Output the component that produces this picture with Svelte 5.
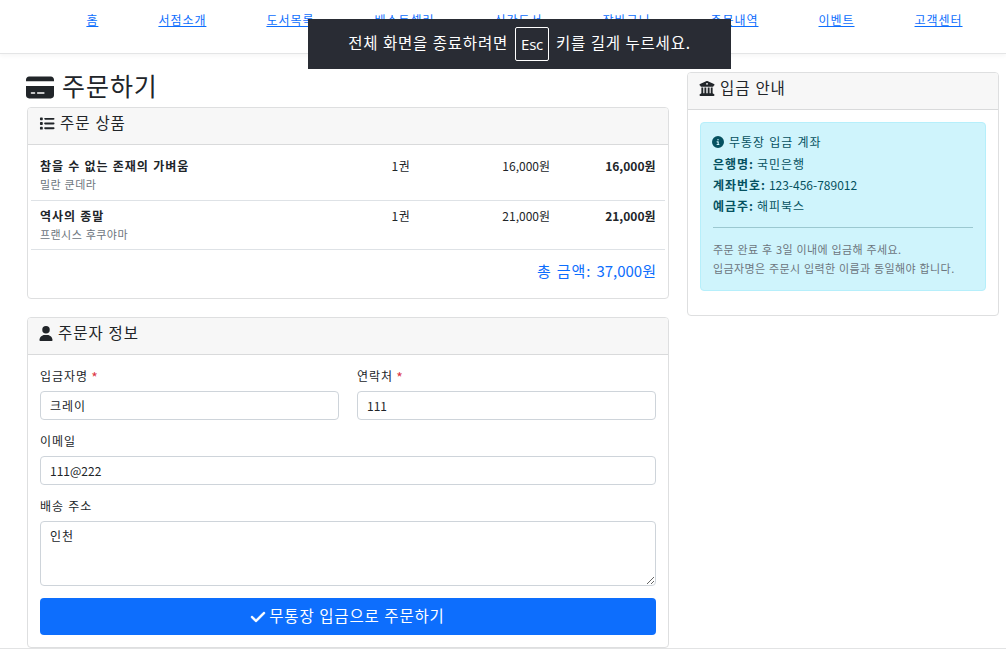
<script>
  const menu = ['홈', '서점소개', '도서목록', '베스트셀러', '신간도서', '장바구니', '주문내역', '이벤트', '고객센터'];
  const items = [
    { title: '참을 수 없는 존재의 가벼움', author: '밀란 쿤데라', qty: '1권', price: '16,000원', sum: '16,000원' },
    { title: '역사의 종말', author: '프랜시스 후쿠야마', qty: '1권', price: '21,000원', sum: '21,000원' }
  ];
  let name = $state('크레이');
  let phone = $state('111');
  let email = $state('111@222');
  let address = $state('인천');

  const icons = {
    card: [576, 'M64 32C28.7 32 0 60.7 0 96v32H576V96c0-35.3-28.7-64-64-64H64zM576 224H0V416c0 35.3 28.7 64 64 64H512c35.3 0 64-28.7 64-64V224zM112 352h64c8.8 0 16 7.2 16 16s-7.2 16-16 16H112c-8.8 0-16-7.2-16-16s7.2-16 16-16zm112 16c0-8.8 7.2-16 16-16H368c8.8 0 16 7.2 16 16s-7.2 16-16 16H240c-8.8 0-16-7.2-16-16z'],
    list: [512, 'M40 48C26.7 48 16 58.7 16 72v48c0 13.3 10.7 24 24 24H88c13.3 0 24-10.7 24-24V72c0-13.3-10.7-24-24-24H40zM192 64c-17.7 0-32 14.3-32 32s14.3 32 32 32H480c17.7 0 32-14.3 32-32s-14.3-32-32-32H192zm0 160c-17.7 0-32 14.3-32 32s14.3 32 32 32H480c17.7 0 32-14.3 32-32s-14.3-32-32-32H192zm0 160c-17.7 0-32 14.3-32 32s14.3 32 32 32H480c17.7 0 32-14.3 32-32s-14.3-32-32-32H192zM16 232v48c0 13.3 10.7 24 24 24H88c13.3 0 24-10.7 24-24V232c0-13.3-10.7-24-24-24H40c-13.3 0-24 10.7-24 24zM40 368c-13.3 0-24 10.7-24 24v48c0 13.3 10.7 24 24 24H88c13.3 0 24-10.7 24-24V392c0-13.3-10.7-24-24-24H40z'],
    user: [448, 'M224 256A128 128 0 1 0 224 0a128 128 0 1 0 0 256zm-45.7 48C79.8 304 0 383.8 0 482.3C0 498.7 13.3 512 29.7 512H418.3c16.4 0 29.7-13.3 29.7-29.7C448 383.8 368.2 304 269.7 304H178.3z'],
    bank: [512, 'M243.4 2.6l-224 96c-14 6-21.8 21-18.7 35.8S16.8 160 32 160v8c0 13.3 10.7 24 24 24H456c13.3 0 24-10.7 24-24v-8c15.2 0 28.3-10.7 31.3-25.6s-4.8-29.9-18.7-35.8l-224-96c-8-3.4-17.2-3.4-25.2 0zM128 224H64V420.3c-.6 .3-1.2 .7-1.8 1.1l-48 32c-11.7 7.8-17 22.4-12.9 35.9S17.9 512 32 512H480c14.1 0 26.5-9.2 30.6-22.7s-1.1-28.1-12.9-35.9l-48-32c-.6-.4-1.2-.7-1.8-1.1V224H384V416H344V224H280V416H232V224H168V416H128V224zM256 64a32 32 0 1 1 0 64 32 32 0 1 1 0-64z'],
    info: [512, 'M256 512A256 256 0 1 0 256 0a256 256 0 1 0 0 512zM216 336h24V272H216c-13.3 0-24-10.7-24-24s10.7-24 24-24h48c13.3 0 24 10.7 24 24v88h8c13.3 0 24 10.7 24 24s-10.7 24-24 24H216c-13.3 0-24-10.7-24-24s10.7-24 24-24zm40-208a32 32 0 1 1 0 64 32 32 0 1 1 0-64z'],
    check: [448, 'M438.6 105.4c12.5 12.5 12.5 32.8 0 45.3l-256 256c-12.5 12.5-32.8 12.5-45.3 0l-128-128c-12.5-12.5-12.5-32.8 0-45.3s32.8-12.5 45.3 0L160 338.7 393.4 105.4c12.5-12.5 32.8-12.5 45.3 0z']
  };
</script>

{#snippet icon(key)}
  <svg class="icon" viewBox="0 0 {icons[key][0]} 512" aria-hidden="true"><path d={icons[key][1]} /></svg>
{/snippet}

<div class="page">
  <nav>
    {#each menu as m}<a href="#top">{m}</a>{/each}
  </nav>

  <main>
    <section class="left">
      <h2>{@render icon('card')}<span>주문하기</span></h2>

      <div class="card">
        <div class="head list">{@render icon('list')}<span>주문 상품</span></div>
        <div class="items">
          {#each items as it}
            <div class="row">
              <div class="book"><strong>{it.title}</strong><small>{it.author}</small></div>
              <span class="num qty">{it.qty}</span>
              <span class="num">{it.price}</span>
              <b class="num">{it.sum}</b>
            </div>
          {/each}
          <div class="total"><span>총 금액:</span><span class="num">37,000원</span></div>
        </div>
      </div>

      <div class="card order">
        <div class="head user">{@render icon('user')}<span>주문자 정보</span></div>
        <form>
          <div class="pair">
            <label>입금자명 <i>*</i><input bind:value={name} /></label>
            <label>연락처 <i>*</i><input class="digits" bind:value={phone} /></label>
          </div>
          <label>이메일<input class="digits" bind:value={email} /></label>
          <label>배송 주소<textarea bind:value={address}></textarea></label>
          <button type="button">{@render icon('check')}<span>무통장 입금으로 주문하기</span></button>
        </form>
      </div>
    </section>

    <aside class="card">
      <div class="head bank">{@render icon('bank')}<span>입금 안내</span></div>
      <div class="alert">
        <p class="lead">{@render icon('info')}<span>무통장 입금 계좌</span></p>
        <p><strong>은행명:</strong><span>국민은행</span></p>
        <p><strong>계좌번호:</strong><span class="digits">123-456-789012</span></p>
        <p><strong>예금주:</strong><span>해피북스</span></p>
        <hr />
        <small>주문 완료 후 3일 이내에 입금해 주세요.</small>
        <small>입금자명은 주문시 입력한 이름과 동일해야 합니다.</small>
      </div>
    </aside>
  </main>
  <footer></footer>

  <div class="toast"><span>전체 화면을 종료하려면</span><kbd>Esc</kbd><span>키를 길게 누르세요.</span></div>
</div>

<style>
  :global(body) { background: #fff; overflow: hidden; }
  .page {
    position: relative;
    width: 1006px;
    height: 657px;
    overflow: hidden;
    color: #212529;
    font: 12px/18px "Noto Sans CJK KR", sans-serif;
    letter-spacing: .08em;
    word-spacing: .05em;
    white-space: nowrap;
  }
  .page * { box-sizing: border-box; }
  .icon { display: block; height: 1em; fill: currentColor; flex: none; }
  nav {
    display: flex;
    gap: 60px;
    height: 54px;
    padding: 11px 0 0 86.4px;
    border-bottom: 1px solid #e4e5e6;
    box-shadow: 0 2px 4px rgba(0, 0, 0, .04);
  }
  nav a { color: #0d6efd; text-decoration: underline; text-underline-offset: 1px; height: 18px; }
  main { display: flex; align-items: flex-start; gap: 18px; padding: 18px 7px 0 27px; height: 594px; }
  .left { width: 642px; }
  h2 {
    display: flex;
    align-items: center;
    gap: 8px;
    height: 29px;
    margin: 0 0 6px -1px;
    font-size: 25px;
    font-weight: 400;
    line-height: 27px;
    letter-spacing: .038em;
  }
  h2 .icon { width: 28px; height: 25px; position: relative; top: 1px; }
  h2 span { padding-bottom: 2px; }
  .card { border: 1px solid #dedfe0; border-radius: 4px; background: #fff; }
  .head {
    display: flex;
    align-items: center;
    gap: 5px;
    height: 37px;
    padding: 0 11px 5px;
    border-bottom: 1px solid #d9dadb;
    border-radius: 3px 3px 0 0;
    background: #f7f7f7;
    font-size: 15.5px;
    line-height: 20px;
    letter-spacing: .06em;
  }
  .head span { padding-bottom: 4px; }
  .head .icon { width: 16px; height: 15px; }
  .head.user .icon { width: 14px; }
  .items { padding: 6px 3px 12px; height: 153px; }
  .row {
    display: grid;
    grid-template-columns: 312px 98px 100px 105.5px;
    align-items: start;
    height: 50px;
    padding: 6px 9px 0;
    border-bottom: 1px solid #dee2e6;
  }
  .row + .row { height: 49px; }
  .book { display: flex; flex-direction: column; }
  .num { letter-spacing: 0; text-align: right; }
  .qty { letter-spacing: .05em; text-align: center; }
  small { font-size: 11px; color: #6c757d; letter-spacing: .04em; }
  .total {
    display: flex;
    justify-content: flex-end;
    gap: 5px;
    padding: 11px 9px 0;
    color: #0d6efd;
    font-size: 15px;
    line-height: 20px;
  }
  .order { margin-top: 18px; height: 331px; }
  form { display: flex; flex-direction: column; gap: 12px; padding: 12px; }
  .pair { display: grid; grid-template-columns: 299px 299px; gap: 18px; }
  label { display: block; }
  i { color: #dc3545; font-style: normal; font-size: 14px; line-height: 12px; margin-left: -1px; vertical-align: -2px; }
  input, textarea {
    display: block;
    width: 100%;
    height: 29px;
    margin: 6px 0 0;
    padding: 4px 9px;
    border: 1px solid #ced4da;
    border-radius: 4px;
    background: #fff;
    color: #212529;
    font: inherit;
    letter-spacing: inherit;
    outline: none;
  }
  textarea { height: 65px; padding-top: 5px; resize: vertical; }
  .digits { letter-spacing: 0; }
  button {
    display: flex;
    align-items: center;
    justify-content: center;
    gap: 4px;
    height: 37px;
    padding: 0;
    border: 0;
    border-radius: 4px;
    background: #0d6efd;
    color: #fff;
    font: 15.5px/20px "Noto Sans CJK KR", sans-serif;
    letter-spacing: .053em;
    word-spacing: .03em;
  }
  button span { padding-bottom: 4px; }
  button .icon { height: 16px; width: 14px; stroke: currentColor; stroke-width: 16; overflow: visible; }
  aside { width: 312px; height: 244px; }
  .alert {
    height: 169px;
    margin: 12px;
    padding: 8px 12px 0;
    border: 1px solid #b6effb;
    border-radius: 4px;
    background: #cff4fc;
    color: #055160;
  }
  p { display: flex; align-items: center; gap: 3px; height: 21px; margin: 0; }
  p.lead { height: 22px; gap: 5px; margin-left: -1px; }
  .alert .icon { width: 12px; height: 12px; }
  hr { height: 1px; margin: 11px 0 12px; border: 0; background: #9bc8d0; }
  .alert small { display: block; line-height: 19px; letter-spacing: .036em; }
  footer { height: 9px; border-top: 1px solid #e2e3e4; }
  .toast {
    position: absolute;
    left: 308px;
    top: 19px;
    display: flex;
    align-items: center;
    justify-content: center;
    gap: 7px;
    width: 423px;
    height: 50px;
    background: #292c34;
    color: #fff;
    font-size: 15.5px;
    line-height: 20px;
    letter-spacing: .05em;
    word-spacing: .03em;
  }
  .toast span { padding-bottom: 4px; }
  kbd {
    width: 34px;
    height: 34px;
    border: 1px solid #fff;
    border-radius: 2px;
    font: 15px/32px "Open Sans", sans-serif;
    letter-spacing: -.02em;
    text-align: center;
  }
</style>
